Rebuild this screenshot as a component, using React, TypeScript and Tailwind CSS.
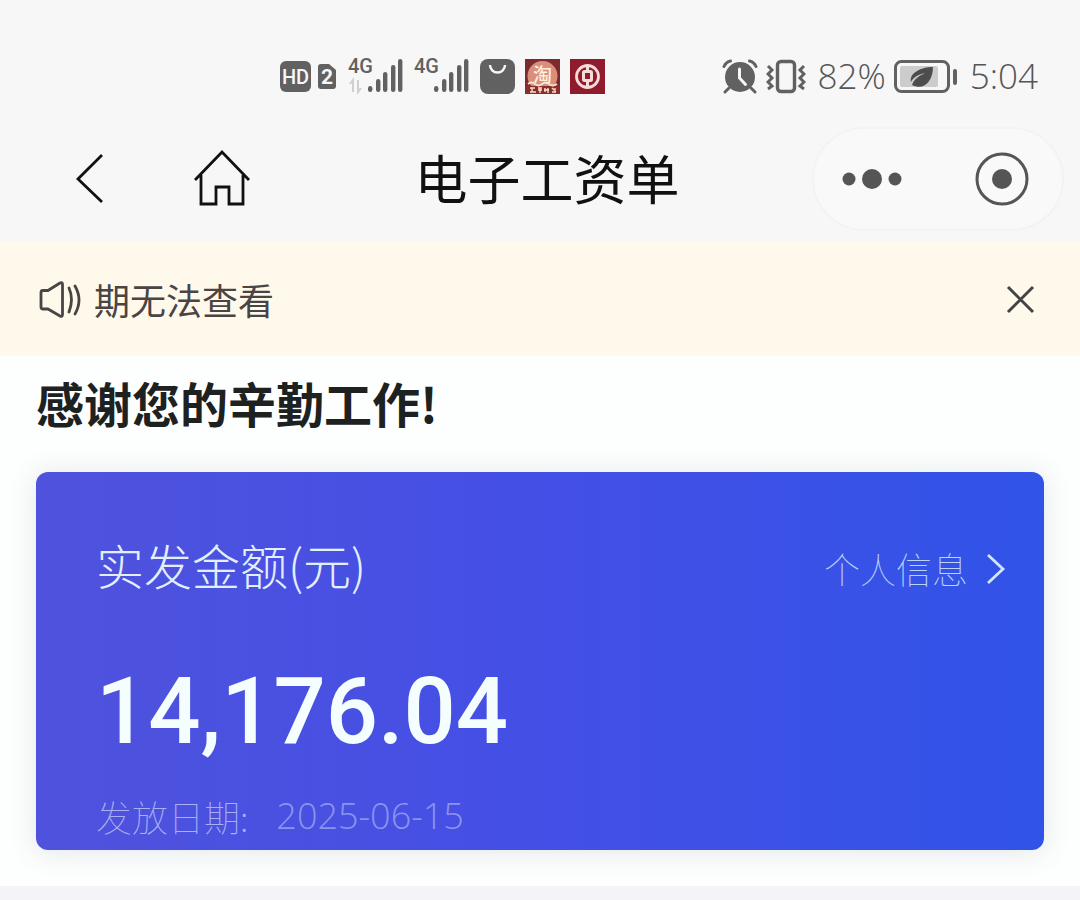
import type { ReactNode } from "react";

type SignalProps = { data?: boolean };

const bars = [
  { x: 20, h: 6 },
  { x: 28, h: 13 },
  { x: 35, h: 20 },
  { x: 43, h: 27 },
  { x: 50, h: 33 },
];

function Signal({ data }: SignalProps) {
  return (
    <svg viewBox="-2 -5 58 46" className="-ml-[2px] h-[46px] w-[58px]" fill="#616161">
      <text x="0" y="15" fontSize="20" fontWeight="500" fontFamily="Roboto, sans-serif">
        4G
      </text>
      {data && (
        <path
          d="M5 34V22l-3 4M10 22v12l3-4"
          fill="none"
          stroke="#d0d0d0"
          strokeWidth="2"
        />
      )}
      {bars.map((b) => (
        <rect key={b.x} x={b.x} y={34 - b.h} width="4.4" height={b.h} rx="2.2" />
      ))}
    </svg>
  );
}

function Sim() {
  return (
    <svg viewBox="0 0 56 36" className="h-9 w-14" fill="#616161">
      <rect x="0" y="3" width="31" height="31" rx="6" />
      <text x="15.5" y="26" fontSize="20" fontWeight="500" textAnchor="middle" fill="#f7f7f7" fontFamily="Roboto, sans-serif">
        HD
      </text>
      <path d="M41 6h8l7 6v16a3 3 0 0 1-3 3H41a3 3 0 0 1-3-3V9a3 3 0 0 1 3-3z" />
      <text x="47" y="26" fontSize="21" fontWeight="700" textAnchor="middle" fill="#f7f7f7" fontFamily="Roboto, sans-serif">
        2
      </text>
    </svg>
  );
}

function AppIcons() {
  return (
    <div className="flex items-center gap-[10px]">
      <svg viewBox="0 0 35 35" className="size-[35px]">
        <rect width="35" height="35" rx="8" fill="#616161" />
        <path d="M10 6a7.500 7.500 0 0 0 15 0" fill="none" stroke="#f7f7f7" strokeWidth="2.400" />
      </svg>
      <svg viewBox="0 0 35 35" className="size-[35px]">
        <rect width="35" height="35" fill="#7d2a2c" />
        <circle cx="17.500" cy="17" r="15" fill="#d98f7c" />
        <rect y="27" width="35" height="8" fill="#8c2c2e" />
        <path d="M3 25q3.500-3 7 0t7 0 7 0 8 0" fill="none" stroke="#f9e3cc" strokeWidth="1.800" />
        <text x="17.500" y="23" fontSize="19" fontWeight="500" textAnchor="middle" fill="#fff0dc" fontFamily="'Noto Sans CJK SC', sans-serif">
          淘
        </text>
        <path d="M5 29h5m-3 0v4m-2 0h6M13 29h4m-4 2h4m-2-2v5M20 29v4m-1-2h5m-1-2v5M27 29l2 2m-2 2h4m-1-4v4" fill="none" stroke="#f9dfc8" strokeWidth="1.400" />
      </svg>
      <svg viewBox="0 0 35 35" className="size-[35px]">
        <rect width="35" height="35" fill="#8f1b2d" />
        <g fill="none" stroke="#f5dcd8">
          <circle cx="17.500" cy="17.500" r="11" strokeWidth="2.800" />
          <path d="M17.500 6v7M17.500 22v7" strokeWidth="3" />
          <rect x="13.500" y="12.500" width="8" height="9" rx="1" strokeWidth="3" />
        </g>
      </svg>
    </div>
  );
}

function Alarm() {
  return (
    <svg viewBox="0 0 36 36" className="size-9">
      <circle cx="18" cy="19" r="15" fill="#616161" />
      <path
        d="M2 8.500Q4 4 8.500 3M34 8.500Q32 4 27.500 3M7 30l-4 4M29 30l4 4"
        fill="none"
        stroke="#616161"
        strokeWidth="3"
        strokeLinecap="round"
      />
      <path d="M17.500 11v9l6 6.500" fill="none" stroke="#f7f7f7" strokeWidth="3" strokeLinecap="round" strokeLinejoin="round" />
    </svg>
  );
}

function Vibrate() {
  return (
    <svg viewBox="0 0 40 36" className="h-9 w-10" fill="none" stroke="#616161">
      <rect x="11.500" y="3.500" width="17" height="30" rx="3.500" strokeWidth="3.400" />
      <path d="M2 8l4 4-4 4 4 4-4 4 4 4-4 3M38 8l-4 4 4 4-4 4 4 4-4 4 4 3" strokeWidth="3" />
    </svg>
  );
}

function Battery() {
  return (
    <svg viewBox="0 0 64 36" className="h-9 w-16">
      <rect x="1.500" y="3.500" width="53" height="30" rx="6" fill="none" stroke="#616161" strokeWidth="3" />
      <rect x="6" y="8" width="38" height="21" rx="2" fill="#cccccc" />
      <path d="M39 9c-12 0-24 6-22 15 2-5 9-8 14-9-6 3-11 6-13 12 12 6 21-4 21-18z" fill="#4d4d4d" />
      <rect x="59" y="11" width="4" height="16" rx="2" fill="#616161" />
    </svg>
  );
}

function StatusBar() {
  return (
    <div className="flex h-14 items-center justify-between pr-[42px] pl-[280px] text-[#555]">
      <div className="flex items-center gap-3">
        <Sim />
        <div className="flex items-center gap-[10px]">
          <Signal data />
          <Signal />
          <AppIcons />
        </div>
      </div>
      <div className="flex items-center gap-2 font-['Open_Sans',sans-serif] text-[35px] leading-10 font-light">
        <div className="flex items-center gap-2 pr-1">
          <Alarm />
          <Vibrate />
        </div>
        <span>82%</span>
        <Battery />
        <span className="pl-1">5:04</span>
      </div>
    </div>
  );
}

type IconButtonProps = { label: string; className?: string; children: ReactNode };

function IconButton({ label, className, children }: IconButtonProps) {
  return (
    <button type="button" aria-label={label} className={className}>
      {children}
    </button>
  );
}

function NavBar() {
  return (
    <header className="flex items-center pt-[23px] pr-4 pb-[11px] pl-[76px]">
      <div className="flex items-center gap-[90px]">
        <IconButton label="返回">
          <svg viewBox="0 0 28 56" className="h-14 w-7" fill="none" stroke="#111" strokeWidth="2.800">
            <path d="M26 4L2 28l24 23" />
          </svg>
        </IconButton>
        <IconButton label="首页">
          <svg viewBox="0 0 56 60" className="h-[60px] w-14" fill="none" stroke="#111" strokeWidth="2.800">
            <path d="M1 31L28 3l27 28M7 26v29h15V38h13v17h14V26" />
          </svg>
        </IconButton>
      </div>
      <h1 className="flex-1 pb-1 pl-8 text-center text-[53px] leading-[60px] text-[#111]">电子工资单</h1>
      <div className="flex h-[104px] w-[252px] items-center justify-between rounded-full border-2 border-[#f3f3f3] bg-[#f9f9f9] pr-8 pl-[26px]">
        <IconButton label="更多">
          <svg viewBox="0 0 64 24" className="h-6 w-16" fill="#555">
            <circle cx="9" cy="12" r="6.500" />
            <circle cx="32" cy="12" r="10" />
            <circle cx="55" cy="12" r="6.500" />
          </svg>
        </IconButton>
        <IconButton label="关闭">
          <svg viewBox="0 0 56 56" className="size-14">
            <circle cx="28" cy="28" r="25" fill="none" stroke="#555" strokeWidth="3" />
            <circle cx="28" cy="28" r="10" fill="#555" />
          </svg>
        </IconButton>
      </div>
    </header>
  );
}

function Notice() {
  return (
    <div className="flex h-[114px] items-center gap-3 bg-[#fff9ec] pr-11 pl-9 text-[#4a4444]">
      <svg viewBox="0 0 46 40" className="h-10 w-[46px]" fill="none" stroke="#4a4444" strokeWidth="2.800" strokeLinecap="round" strokeLinejoin="round">
        <path d="M5 13.500q0-2 2-2h5L24 4q2.500-1.200 2.500 1.500v30q0 2.700-2.500 1.500L12 30H7q-2 0-2-2z" />
        <path d="M33 9q5 11 0 24M39 7q8 14 0 28" />
      </svg>
      <p className="flex-1 text-[36px] leading-10">期无法查看</p>
      <IconButton label="关闭提示">
        <svg viewBox="0 0 32 32" className="size-8" stroke="#444" strokeWidth="3">
          <path d="M4 4l25 25M29 4L4 29" />
        </svg>
      </IconButton>
    </div>
  );
}

function SalaryCard() {
  return (
    <section className="mt-10 rounded-xl bg-linear-to-r from-[#4f52dc] via-[#444fe6] to-[#3053e8] px-[60px] pt-16 pb-3 shadow-[0_2px_28px_rgba(90,110,120,0.16)]">
      <div className="-mr-6 flex items-center justify-between">
        <h3 className="text-[48px] leading-14 font-light text-[#e2efff]">实发金额(元)</h3>
        <a href="#profile" className="flex items-center gap-4 pt-2 text-[36px] leading-10 font-thin text-[#bcd3fb]">
          个人信息
          <svg viewBox="0 0 24 36" className="h-9 w-6" fill="none" stroke="#d3e6ff" strokeWidth="2.800">
            <path d="M4 5l15 14L4 33" />
          </svg>
        </a>
      </div>
      <p className="mt-[70px] font-['Roboto',sans-serif] text-[92px] leading-[100px] font-medium text-[#f4feff]">14,176.04</p>
      <p className="mt-8 flex gap-7 text-[36px] leading-[44px] font-thin text-[#a9b1f6]">
        <span>发放日期:</span>
        <time dateTime="2025-06-15" className="font-['Open_Sans',sans-serif] font-light text-[#8c93f0]">
          2025-06-15
        </time>
      </p>
    </section>
  );
}

export default function App() {
  return (
    <div lang="zh-CN" className="min-h-screen bg-[#f4f4f8] font-['Noto_Sans_CJK_SC',sans-serif]">
      <div className="bg-[#f7f7f7] pt-12">
        <StatusBar />
        <NavBar />
      </div>
      <Notice />
      <main className="bg-[#fdfefe] px-9 pt-4 pb-9">
        <h2 className="text-[48px] leading-[60px] font-bold text-[#1d211f]">感谢您的辛勤工作!</h2>
        <SalaryCard />
      </main>
    </div>
  );
}
